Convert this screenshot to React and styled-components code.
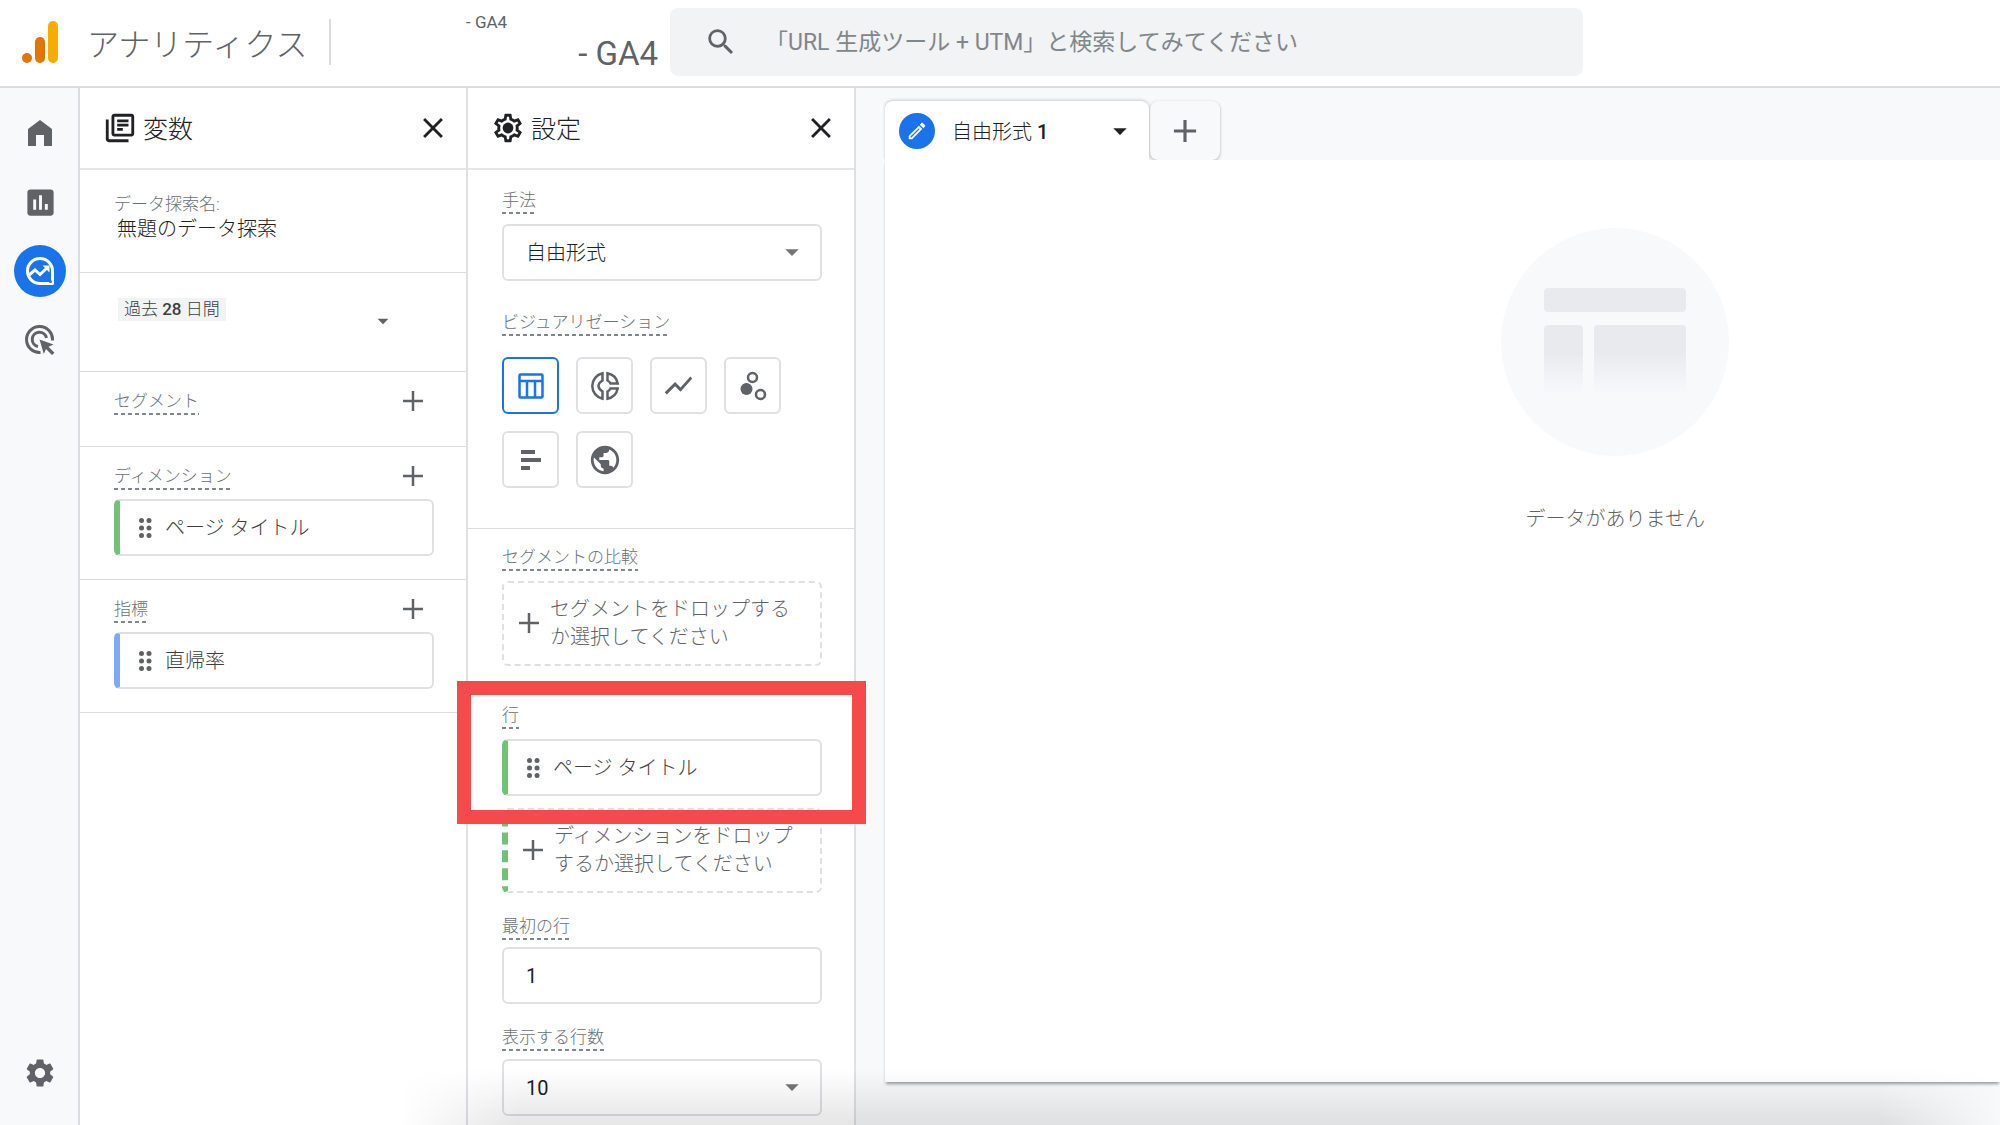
import React from 'react'
import styled, { createGlobalStyle, css } from 'styled-components'
import {
	MdAdd,
	MdArrowDropDown,
	MdClose,
	MdInsertChart,
	MdOutlineEdit,
	MdOutlineLibraryBooks,
	MdPublic,
	MdSearch,
	MdSettings,
	MdShowChart,
} from 'react-icons/md'

const GlobalStyle = createGlobalStyle`
	* {
		box-sizing: border-box;
	}

	body {
		margin: 0;
		overflow: hidden;
		background: #fff;
		color: #202124;
		font-family: Roboto, 'Noto Sans CJK JP', sans-serif;
		font-size: 20px;
	}

	button, input, select {
		font: inherit;
		color: inherit;
	}

	button {
		display: flex;
		align-items: center;
		justify-content: center;
		padding: 0;
		border: 0;
		background: none;
		cursor: pointer;
	}

	h1, h2, p {
		margin: 0;
		font-weight: 300;
	}

	svg {
		display: block;
		flex: none;
	}
`

const Page = styled.div`
	position: relative;
	display: flex;
	flex-direction: column;
	height: 100vh;
	overflow: hidden;
`

const TopBar = styled.header`
	display: flex;
	flex: none;
	align-items: center;
	height: 88px;
	padding: 0 20px 2px;
	border-bottom: 2px solid #dadce0;
`

const Brand = styled.a`
	display: flex;
	align-items: center;
	gap: 27px;
	width: 311px;
	height: 46px;
	border-right: 2px solid #dadce0;
	color: #5f6368;
	font-size: 32px;
	font-weight: 300;
	text-decoration: none;
	white-space: nowrap;
`

const Property = styled.div`
	display: flex;
	flex-direction: column;
	width: 339px;
	padding-right: 12px;
	color: #5f6368;
	white-space: nowrap;
`

const Account = styled.span`
	padding-left: 135px;
	font-size: 17px;
	line-height: 24px;
`

const PropertyName = styled.span`
	align-self: flex-end;
	font-size: 33px;
	line-height: 40px;
`

const SearchBox = styled.label`
	display: flex;
	flex: 1;
	align-items: center;
	gap: 27px;
	height: 68px;
	margin-right: 397px;
	padding: 0 34px;
	border-radius: 8px;
	background: #f1f3f4;
	color: #5f6368;

	input {
		flex: 1;
		padding: 0;
		border: 0;
		outline: 0;
		background: none;
		font-size: 23px;
	}

	input::placeholder {
		color: #80868b;
		opacity: 1;
	}
`

const Body = styled.div`
	display: flex;
	flex: 1;
	min-height: 0;
`

const Rail = styled.nav`
	display: flex;
	flex: none;
	flex-direction: column;
	align-items: center;
	gap: 17px;
	width: 80px;
	padding: 19px 0 26px 2px;
	border-right: 2px solid #dadce0;
	background: #f8f9fb;
`

const RailLink = styled.a`
	display: flex;
	align-items: center;
	justify-content: center;
	width: 52px;
	height: 52px;
	border-radius: 50%;
	background: ${({ $active }) => ($active ? '#1a73e8' : 'none')};
	color: ${({ $active }) => ($active ? '#fff' : '#5f6368')};

	&:last-child {
		margin-top: auto;
	}
`

const Column = styled.section`
	flex: none;
	width: 388px;
	border-right: 2px solid #dfe0e3;
`

const ColumnHeader = styled.header`
	display: flex;
	align-items: center;
	gap: 6px;
	height: 82px;
	padding: 0 16px 0 23px;
	border-bottom: 2px solid #e4e5e7;

	h2 {
		flex: 1;
		padding-bottom: 3px;
		font-size: 25px;
	}
`

const Block = styled.div`
	height: ${({ $height }) => $height}px;
	padding: ${({ $top }) => $top || 18}px 32px 0 34px;
	border-bottom: ${({ $last }) => ($last ? 0 : '1px solid #dadce0')};
`

const LabelRow = styled.div`
	display: flex;
	align-items: flex-start;
	justify-content: space-between;
	height: 34px;
	padding-right: 11px;
	color: #5f6368;

	button {
		margin-top: 1px;
	}
`

const labelText = css`
	color: #6b7075;
	font-size: 17px;
	font-weight: 300;
	line-height: 22px;
`

const Label = styled.label`
	${labelText}
	display: block;
	width: fit-content;
	padding-bottom: 3px;
	background: repeating-linear-gradient(90deg, #80868b 0 4px, transparent 4px 7px) bottom / 100% 2px no-repeat;
`

const NameLabel = styled.label`
	${labelText}
	display: block;
`

const NameInput = styled.input`
	width: 100%;
	padding: 0 3px;
	border: 0;
	outline: 0;
	background: none;
	font-weight: 300;
	line-height: 28px;
`

const DateRange = styled.button`
	justify-content: space-between;
	width: 100%;
	padding-right: 38px;
`

const DateChip = styled.span`
	margin: 0 0 23px 4px;
	padding: 0 6px;
	background: #f1f3f4;
	color: #3c4043;
	font-size: 17px;
	font-weight: 300;
	line-height: 23px;

	b {
		font-weight: 500;
	}
`

const Field = styled.div`
	margin: ${({ $top }) => $top || 0}px 0 ${({ $gap }) => $gap}px;
`

const control = css`
	display: flex;
	align-items: center;
	width: 100%;
	height: 57px;
	border: 2px solid #dfe0e4;
	border-radius: 6px;
	background: #fff;
`

const SelectWrap = styled.div`
	position: relative;
	margin-top: ${({ $top }) => $top}px;

	svg {
		position: absolute;
		top: 12px;
		right: 14px;
		color: #757575;
		pointer-events: none;
	}
`

const Select = styled.select`
	${control}
	padding: 0 22px;
	appearance: none;
	font-weight: ${({ $light }) => ($light ? 300 : 400)};
`

const NumberInput = styled.input`
	${control}
	margin-top: 7px;
	padding: 0 22px;
	outline: 0;
`

const Token = styled.button`
	${control}
	justify-content: flex-start;
	gap: 13px;
	margin-top: ${({ $top }) => $top || 0}px;
	padding: 0 19px;
	border-left: 6px solid ${({ $color }) => $color};
	color: #3c4043;
	font-weight: 300;

	span {
		padding-bottom: 2px;
	}
`

const DropZone = styled.button`
	justify-content: flex-start;
	gap: 11px;
	width: 100%;
	height: 85px;
	margin-top: ${({ $top }) => $top}px;
	padding: 0 12px 2px 15px;
	border: 2px dashed #dfe0e4;
	border-left: ${({ $color }) => ($color ? `6px dashed ${$color}` : '2px dashed #dfe0e4')};
	border-radius: 6px;
	color: #5f6368;
	font-weight: 300;
	line-height: 28px;
	text-align: left;
`

const Tiles = styled.div`
	display: flex;
	flex-wrap: wrap;
	gap: 17px;
	margin-top: 21px;
`

const Tile = styled.button`
	width: 57px;
	height: 57px;
	border: 2px solid ${({ $active }) => ($active ? '#1a73e8' : '#dfe0e4')};
	border-radius: 6px;
	color: ${({ $active }) => ($active ? '#1a73e8' : '#5f6368')};
`

const RowsField = styled.div`
	position: relative;
	margin-top: 38px;
`

const Highlight = styled.div`
	position: absolute;
	z-index: 2;
	inset: -23px -44px auto -45px;
	height: 143px;
	border: 14px solid #f6494b;
	pointer-events: none;
`

const Workspace = styled.main`
	display: flex;
	flex: 1;
	flex-direction: column;
	min-width: 0;
	padding: 13px 0 43px 29px;
	background: #f8f9fb;
`

const Tabs = styled.div`
	display: flex;
	flex: none;
	height: 59px;
`

const Tab = styled.div`
	z-index: 1;
	display: flex;
	align-items: center;
	gap: 17px;
	width: 264px;
	padding: 0 13px 0 14px;
	border-radius: 8px 8px 0 0;
	background: #fff;
	box-shadow: 0 -1px 3px rgba(60, 64, 67, .25);
	font-weight: 300;

	b {
		font-weight: 500;
	}

	button:last-child {
		margin-left: auto;
	}
`

const EditButton = styled.button`
	width: 36px;
	height: 36px;
	border-radius: 50%;
	background: #1a73e8;
	color: #fff;
`

const AddTab = styled.button`
	width: 70px;
	margin-left: 1px;
	border-radius: 8px;
	box-shadow: 0 1px 3px rgba(60, 64, 67, .4);
	color: #5f6368;
`

const Canvas = styled.div`
	z-index: 1;
	flex: 1;
	display: flex;
	flex-direction: column;
	align-items: center;
	gap: 47px;
	padding: 68px 0 0 31%;
	background: #fff;
	box-shadow: 0 3px 3px -1px rgba(60, 64, 67, .5);
	color: #5f6368;
`

const BottomShade = styled.div`
	position: absolute;
	z-index: 3;
	right: 0;
	bottom: 0;
	left: 400px;
	height: 56px;
	background: linear-gradient(transparent, rgba(0, 0, 0, .1));
	mask-image: linear-gradient(90deg, transparent, #000 120px calc(100% - 120px), transparent);
	pointer-events: none;
`

const Logo = () => (
	<svg width="40" height="44" viewBox="0 0 40 44" aria-hidden="true">
		<rect x="28" y="1" width="10" height="42" rx="5" fill="#f9ab00" />
		<rect x="15" y="17" width="10" height="26" rx="5" fill="#e37400" />
		<circle cx="7" cy="38" r="5" fill="#e37400" />
	</svg>
)

const HomeIcon = () => (
	<svg width="24" height="26" viewBox="0 0 24 26" fill="currentColor" aria-hidden="true">
		<path d="M12 0L24 9v17h-8V15H8v11H0V9z" />
	</svg>
)

const ExploreIcon = () => (
	<svg width="30" height="30" viewBox="0 0 30 30" fill="none" stroke="currentColor" strokeWidth="3" aria-hidden="true">
		<path d="M27.500 15v12.500H15A12.500 12.500 0 1 1 27.500 15z" strokeLinejoin="round" />
		<path d="M4 19l6-5 5 4.500 8-7.500" />
		<path d="M17.500 9.500h7v7z" fill="currentColor" stroke="none" />
		<path d="M28 20v8h-8c4-1 7-4 8-8z" fill="currentColor" stroke="none" />
		<circle cx="25.500" cy="25.500" r="1.500" fill="#1a73e8" stroke="none" />
	</svg>
)

const TargetIcon = () => (
	<svg width="30" height="30" viewBox="0 0 30 30" fill="none" stroke="currentColor" strokeWidth="3" aria-hidden="true">
		<path d="M15.500 27.500A13 13 0 1 1 27.500 15.500" />
		<path d="M13 21.500A7.200 7.200 0 1 1 21.500 13" />
		<path d="M14.500 14.500l14 5-5 2.200 6 6-2.500 2.300-6-6-2.200 5z" fill="currentColor" stroke="none" />
	</svg>
)

const SettingsIcon = () => (
	<svg width="34" height="34" viewBox="0 0 24 24" fill="currentColor" aria-hidden="true">
		<path d="M19.430 12.980c.04-.32.07-.64.07-.98 0-.34-.03-.66-.07-.98l2.110-1.650c.19-.15.24-.42.12-.64l-2-3.460a.5.5 0 0 0-.61-.22l-2.490 1c-.52-.4-1.080-.73-1.690-.98l-.38-2.650A.488.488 0 0 0 14 2h-4c-.25 0-.46.18-.49.42l-.38 2.650c-.61.25-1.170.59-1.690.98l-2.490-1a.5.5 0 0 0-.61.22l-2 3.460c-.13.22-.07.49.12.64l2.110 1.650c-.04.32-.07.65-.07.98 0 .33.03.66.07.98l-2.110 1.650c-.19.15-.24.42-.12.64l2 3.460a.5.5 0 0 0 .61.22l2.490-1c.52.4 1.080.73 1.690.98l.38 2.650c.03.24.24.42.49.42h4c.25 0 .46-.18.49-.42l.38-2.650c.61-.25 1.170-.59 1.690-.98l2.490 1a.5.5 0 0 0 .61-.22l2-3.460c.12-.22.07-.49-.12-.64l-2.110-1.650zm-1.980-1.710c.04.31.05.52.05.73 0 .21-.02.43-.05.73l-.14 1.130.89.7 1.080.84-.7 1.210-1.270-.51-1.040-.42-.9.68c-.43.32-.84.56-1.250.73l-1.060.43-.16 1.130-.2 1.350h-1.400l-.19-1.350-.16-1.130-1.060-.43c-.43-.18-.83-.41-1.230-.71l-.91-.7-1.060.43-1.270.51-.7-1.210 1.080-.84.89-.7-.14-1.130c-.03-.31-.05-.54-.05-.74s.02-.43.05-.73l.14-1.130-.89-.7-1.080-.84.7-1.210 1.270.51 1.040.42.9-.68c.43-.32.84-.56 1.250-.73l1.060-.43.16-1.130.2-1.350h1.390l.19 1.350.16 1.130 1.060.43c.43.18.83.41 1.230.71l.91.7 1.060-.43 1.270-.51.7 1.210-1.070.85-.89.7.14 1.130z" />
		<circle cx="12" cy="12" r="3.800" />
	</svg>
)

const TableIcon = () => (
	<svg width="26" height="26" viewBox="0 0 26 26" fill="none" stroke="currentColor" strokeWidth="2.500" aria-hidden="true">
		<rect x="1.500" y="1.500" width="23" height="23" rx="1" />
		<path d="M1 8h24M9 8v17M17 8v17" />
	</svg>
)

const DonutIcon = () => (
	<svg width="30" height="30" viewBox="0 0 30 30" fill="none" stroke="currentColor" strokeWidth="2.500" aria-hidden="true">
		<path d="M12.500 2.300A13 13 0 0 0 12.500 27.700V20.500Q8.500 18 8.500 15T12.500 9.500z" />
		<path d="M17.500 2.300A13 13 0 0 1 27.700 12.500H20.500Q19.500 10.500 17.500 9.500z" />
		<path d="M17.500 27.700A13 13 0 0 0 27.700 17.500H20.500Q19.500 19.500 17.500 20.500z" />
	</svg>
)

const ScatterIcon = () => (
	<svg width="28" height="30" viewBox="0 0 28 30" fill="none" stroke="currentColor" strokeWidth="2.500" aria-hidden="true">
		<circle cx="13.500" cy="6.500" r="4.500" />
		<circle cx="7.500" cy="18" r="6" fill="currentColor" stroke="none" />
		<circle cx="21.500" cy="23.500" r="4.500" />
	</svg>
)

const BarsIcon = () => (
	<svg width="20" height="20" viewBox="0 0 20 20" fill="currentColor" aria-hidden="true">
		<path d="M0 0h14v4H0zM0 8h20v4H0zM0 16h9v4H0z" />
	</svg>
)

const DragIcon = () => (
	<svg width="13" height="20" viewBox="0 0 13 20" fill="#5f6368" aria-hidden="true">
		{[2.5, 10, 17.5].map(y => (
			<React.Fragment key={y}>
				<circle cx="2.500" cy={y} r="2.500" />
				<circle cx="10" cy={y} r="2.500" />
			</React.Fragment>
		))}
	</svg>
)

const EmptyArt = () => (
	<svg width="228" height="228" viewBox="0 0 228 228" aria-hidden="true">
		<defs>
			<linearGradient id="fade" x1="0" y1="0" x2="0" y2="1">
				<stop offset=".4" stopColor="#e8eaed" />
				<stop offset="1" stopColor="#f8f9fb" />
			</linearGradient>
		</defs>
		<circle cx="114" cy="114" r="114" fill="#f8f9fb" />
		<rect x="43" y="60" width="142" height="24" rx="4" fill="#e8eaed" />
		<path d="M43 101q0-4 4-4h31q4 0 4 4v65H43zM93 101q0-4 4-4h84q4 0 4 4v65H93z" fill="url(#fade)" />
	</svg>
)

const Plus = () => (
	<svg width="20" height="20" viewBox="0 0 20 20" stroke="currentColor" strokeWidth="2.500" aria-hidden="true">
		<path d="M10 0v20M0 10h20" />
	</svg>
)

const railItems = [
	{ name: 'ホーム', icon: <HomeIcon /> },
	{ name: 'レポート', icon: <MdInsertChart size={35} /> },
	{ name: '探索', icon: <ExploreIcon />, active: true },
	{ name: '広告', icon: <TargetIcon /> },
	{ name: '管理', icon: <MdSettings size={34} /> },
]

const charts = [
	{ name: '表', icon: <TableIcon />, active: true },
	{ name: 'ドーナツ グラフ', icon: <DonutIcon /> },
	{ name: '折れ線グラフ', icon: <MdShowChart size={33} /> },
	{ name: '散布図', icon: <ScatterIcon /> },
	{ name: '棒グラフ', icon: <BarsIcon /> },
	{ name: '地図', icon: <MdPublic size={34} /> },
]

const Variables = () => (
	<Column>
		<ColumnHeader>
			<MdOutlineLibraryBooks size={34} />
			<h2>変数</h2>
			<button aria-label="変数を閉じる"><MdClose size={34} /></button>
		</ColumnHeader>
		<Block $height={103} $top={23}>
			<NameLabel htmlFor="name">データ探索名:</NameLabel>
			<NameInput id="name" defaultValue="無題のデータ探索" />
		</Block>
		<Block $height={99} $top={25}>
			<DateRange>
				<DateChip>過去 <b>28</b> 日間</DateChip>
				<MdArrowDropDown size={26} color="#5f6368" />
			</DateRange>
		</Block>
		<Block $height={75}>
			<LabelRow>
				<Label as="span">セグメント</Label>
				<button aria-label="セグメントを追加"><Plus /></button>
			</LabelRow>
		</Block>
		<Block $height={133}>
			<LabelRow>
				<Label as="span">ディメンション</Label>
				<button aria-label="ディメンションを追加"><Plus /></button>
			</LabelRow>
			<Token $color="#71c177"><DragIcon /><span>ページ タイトル</span></Token>
		</Block>
		<Block $height={133}>
			<LabelRow>
				<Label as="span">指標</Label>
				<button aria-label="指標を追加"><Plus /></button>
			</LabelRow>
			<Token $color="#7baaf7"><DragIcon /><span>直帰率</span></Token>
		</Block>
	</Column>
)

const Settings = () => (
	<Column>
		<ColumnHeader>
			<SettingsIcon />
			<h2>設定</h2>
			<button aria-label="設定を閉じる"><MdClose size={34} /></button>
		</ColumnHeader>
		<Block $height={359} $top={19}>
			<Field $gap={30}>
				<Label htmlFor="technique">手法</Label>
				<SelectWrap $top={10}>
					<Select id="technique" $light>
						<option>自由形式</option>
					</Select>
					<MdArrowDropDown size={32} />
				</SelectWrap>
			</Field>
			<Label as="span">ビジュアリゼーション</Label>
			<Tiles>
				{charts.map(({ name, icon, active }) => (
					<Tile key={name} $active={active} aria-label={name}>{icon}</Tile>
				))}
			</Tiles>
		</Block>
		<Block $height={620} $top={17} $last>
			<Label as="span">セグメントの比較</Label>
			<DropZone $top={10}>
				<Plus />
				<span>セグメントをドロップする<br />か選択してください</span>
			</DropZone>
			<RowsField>
				<Label as="span">行</Label>
				<Token $top={10} $color="#71c177"><DragIcon /><span>ページ タイトル</span></Token>
				<Highlight />
			</RowsField>
			<DropZone $top={12} $color="#71c177">
				<Plus />
				<span>ディメンションをドロップ<br />するか選択してください</span>
			</DropZone>
			<Field $top={22} $gap={22}>
				<Label htmlFor="first-row">最初の行</Label>
				<NumberInput id="first-row" defaultValue="1" />
			</Field>
			<Label htmlFor="row-count">表示する行数</Label>
			<SelectWrap $top={8}>
				<Select id="row-count">
					<option>10</option>
				</Select>
				<MdArrowDropDown size={32} />
			</SelectWrap>
		</Block>
	</Column>
)

const App = () => {
	return (
		<Page>
			<GlobalStyle />
			<TopBar>
				<Brand href="#">
					<Logo />
					アナリティクス
				</Brand>
				<Property>
					<Account>- GA4</Account>
					<PropertyName>- GA4</PropertyName>
				</Property>
				<SearchBox>
					<MdSearch size={34} />
					<input type="search" aria-label="検索" placeholder="「URL 生成ツール + UTM」と検索してみてください" />
				</SearchBox>
			</TopBar>
			<Body>
				<Rail>
					{railItems.map(({ name, icon, active }) => (
						<RailLink key={name} href="#" aria-label={name} $active={active}>{icon}</RailLink>
					))}
				</Rail>
				<Variables />
				<Settings />
				<Workspace>
					<Tabs>
						<Tab>
							<EditButton aria-label="編集"><MdOutlineEdit size={22} /></EditButton>
							<span>自由形式 <b>1</b></span>
							<button aria-label="タブのメニュー"><MdArrowDropDown size={32} /></button>
						</Tab>
						<AddTab aria-label="タブを追加"><MdAdd size={38} /></AddTab>
					</Tabs>
					<Canvas>
						<EmptyArt />
						<p>データがありません</p>
					</Canvas>
				</Workspace>
			</Body>
			<BottomShade />
		</Page>
	)
}

export default App
